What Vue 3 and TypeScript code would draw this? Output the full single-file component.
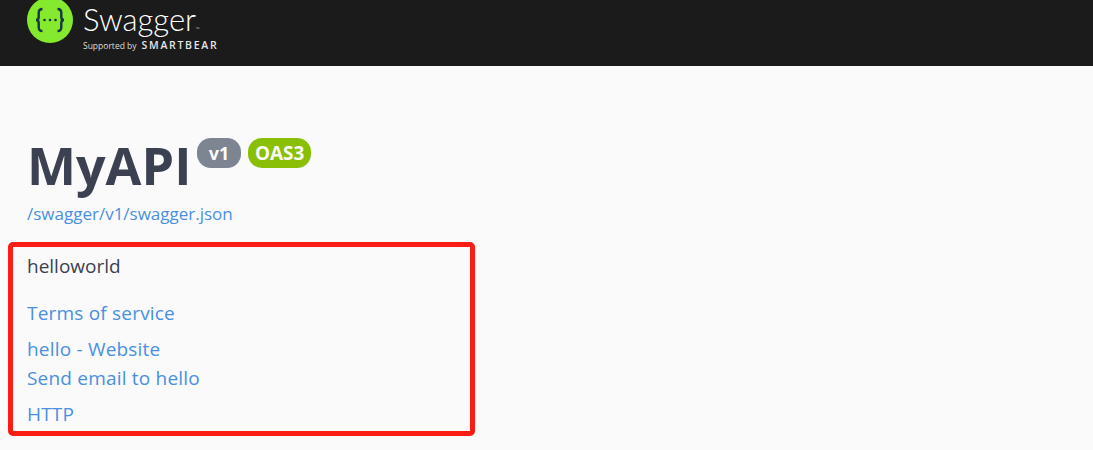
<script setup lang="ts">
const links = ['hello - Website', 'Send email to hello']
</script>

<template>
  <div class="page">
    <header class="topbar">
      <div class="logo">
        <svg class="logo-mark" width="46" height="43" viewBox="0 3 46 43">
          <circle cx="23" cy="23" r="23" fill="#85ea2d" />
          <path
            d="M15.500 12c-3 0-3.800 1.500-3.800 3.800v4.200c0 1.900-.9 3-2.700 3 1.800 0 2.700 1.100 2.700 3v4.200c0 2.300.8 3.800 3.800 3.800M30.500 12c3 0 3.800 1.500 3.800 3.800v4.200c0 1.900.9 3 2.700 3-1.800 0-2.700 1.100-2.700 3v4.200c0 2.300-.8 3.800-3.800 3.800"
            fill="none"
            stroke="#173647"
            stroke-width="2.400"
          />
          <circle cx="17.500" cy="23" r="1.300" fill="#173647" />
          <circle cx="23" cy="23" r="1.300" fill="#173647" />
          <circle cx="28.500" cy="23" r="1.300" fill="#173647" />
        </svg>
        <div class="logo-text">
          <div class="logo-name">Swagger<span class="tm">™</span></div>
          <div class="logo-sub">
            <span class="supported">Supported by</span>
            <span class="bear">SMARTBEAR</span>
          </div>
        </div>
      </div>
    </header>

    <main class="info">
      <div class="title-row">
        <h1 class="title">MyAPI</h1>
        <span class="badge version">v1</span>
        <span class="badge oas">OAS3</span>
      </div>
      <a class="link spec-link">/swagger/v1/swagger.json</a>

      <section class="details">
        <p class="desc">helloworld</p>
        <a class="link terms">Terms of service</a>
        <div class="contact">
          <a v-for="item in links" :key="item" class="link">{{ item }}</a>
        </div>
        <a class="link license">HTTP</a>
      </section>
    </main>
  </div>
</template>

<style scoped>
.page {
  height: 450px;
  overflow: hidden;
  background: #fafafa;
  font-family: "Open Sans", "Noto Sans", sans-serif;
}

.topbar {
  height: 66px;
  background: #1b1b1b;
}

.logo {
  display: flex;
  gap: 10px;
  margin-left: 27px;
}

.logo-mark {
  flex: none;
}

.logo-text {
  color: #fff;
  margin-top: 1px;
}

.logo-name {
  font-family: Lato, sans-serif;
  font-size: 31px;
  line-height: 37px;
  font-weight: 300;
}

.tm {
  font-size: 5px;
}

.logo-sub {
  display: flex;
  align-items: baseline;
  gap: 5px;
  height: 14px;
  margin-top: -10px;
  line-height: 14px;
}

.supported {
  font-size: 8.500px;
  color: #ddd;
}

.bear {
  font-size: 10.500px;
  font-weight: 600;
  letter-spacing: 1.700px;
  color: #e6e6e6;
}

.info {
  padding: 66px 0 0 27px;
}

.title-row {
  display: flex;
  align-items: flex-start;
  height: 66px;
}

.title {
  margin: 0 6px 0 0;
  font-size: 52px;
  line-height: 66px;
  font-weight: 700;
  color: #3b4151;
  font-family: "Open Sans", sans-serif;
}

.badge {
  height: 30px;
  margin: 6px 7px 0 0;
  padding: 0 11.500px;
  border-radius: 14px;
  color: #fafafa;
  font-size: 18px;
  font-weight: 700;
  line-height: 30px;
}

.version {
  background: #7d8492;
}

.oas {
  padding: 0 7px;
  background: #89bf04;
  font-size: 19px;
}

.link {
  display: block;
  color: #4990e2;
  font-size: 19px;
  letter-spacing: 0.200px;
  line-height: 29px;
}

.spec-link {
  margin-top: 4px;
  font-size: 17px;
  letter-spacing: 0;
  line-height: 24px;
}

.details {
  position: relative;
  margin-top: 28px;
}

/* the red marker someone drew over the screenshot */
.details::before {
  content: "";
  position: absolute;
  left: -19px;
  top: -12px;
  width: 457px;
  height: 184px;
  border: 5px solid #fb1c14;
  border-radius: 5px;
}

.desc {
  margin: 0;
  color: #3b4151;
  font-size: 19px;
  line-height: 24px;
}

.terms {
  margin-top: 21px;
}

.contact {
  margin-top: 7px;
}

.license {
  margin-top: 7px;
}
</style>
